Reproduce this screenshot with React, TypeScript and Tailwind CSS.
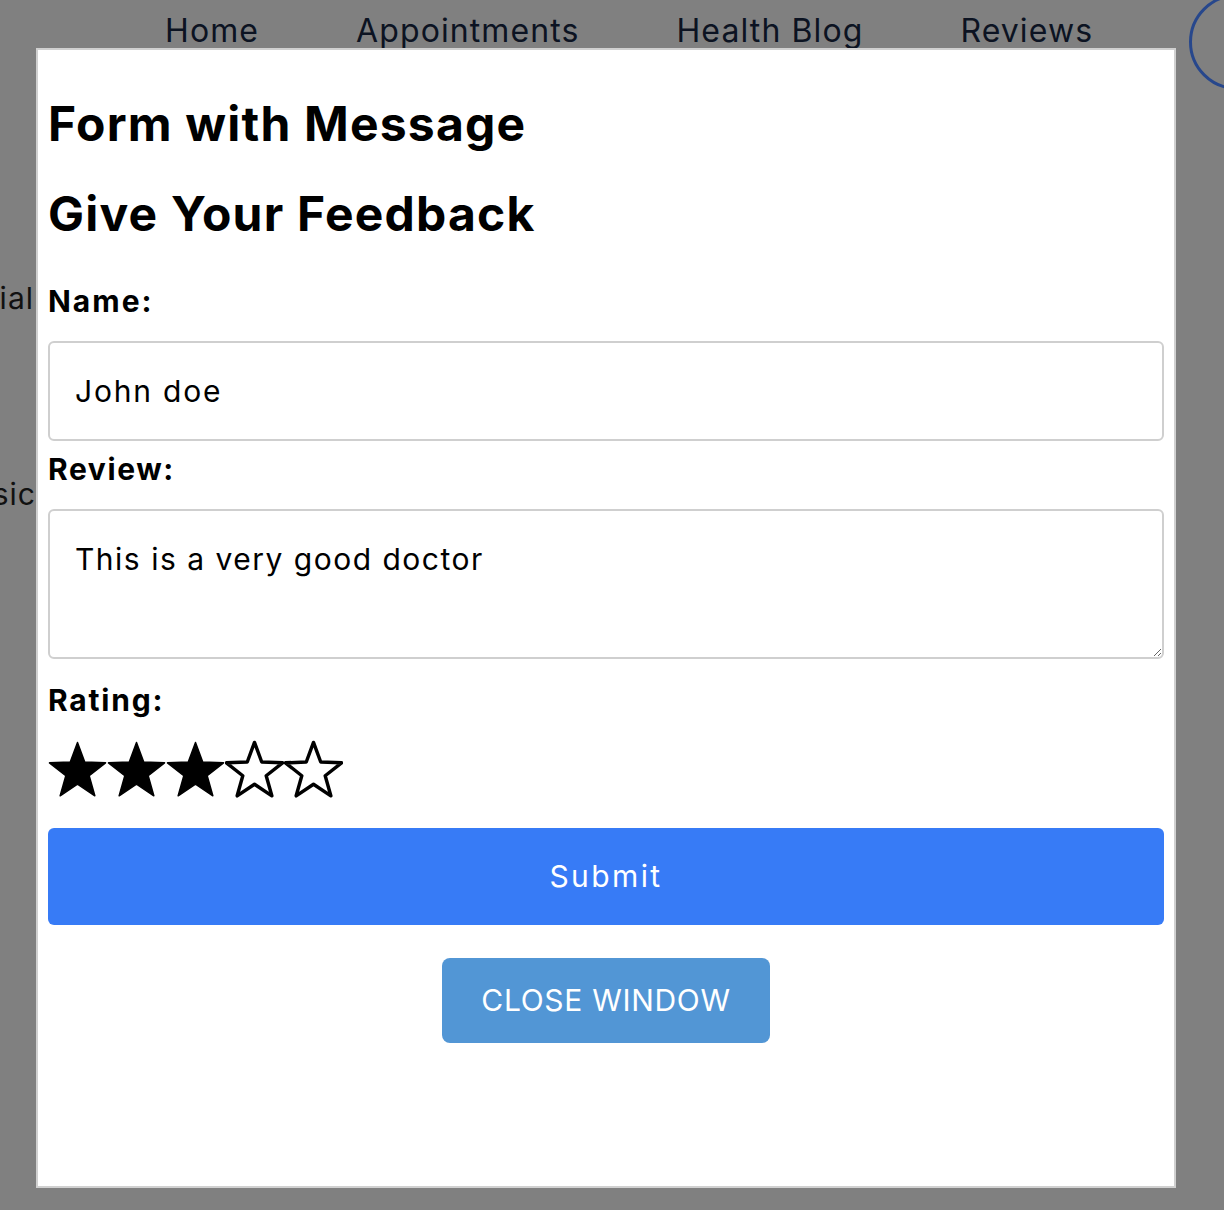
import React from 'react';

const font = { fontFamily: 'Inter, "Noto Sans", sans-serif' };

function Star({ filled }: { filled: boolean }) {
  return (
    <svg width="59" height="58" viewBox="0 0 60 58">
      <polygon
        points="30,2 37.35,21.89 58.53,22.73 41.89,35.86 47.63,56.27 30,44.5 12.37,56.27 18.11,35.86 1.47,22.73 22.65,21.89"
        fill={filled ? '#000' : '#fff'}
        stroke="#000"
        strokeWidth={filled ? 1.5 : 3.5}
        strokeLinejoin="round"
      />
    </svg>
  );
}

export default function App() {
  return (
    <div className="relative w-full h-screen overflow-hidden bg-[#808080]" style={font}>
      <nav className="flex gap-[97px] pl-[165px] pt-[11px] text-[32px] leading-[40px] tracking-[1.1px] text-[#0c1322]">
        <span>Home</span>
        <span>Appointments</span>
        <span>Health Blog</span>
        <span>Reviews</span>
      </nav>
      <div className="absolute left-[1189px] top-[-6px] w-[96px] h-[96px] rounded-full border-[3px] border-[#27478c]" />

      <div className="flex flex-col text-[30px] leading-[34px] tracking-[1px] text-[#111]">
        <div className="flex justify-end w-[34px] overflow-hidden mt-[230px]">
          <span className="shrink-0 whitespace-nowrap">Special</span>
        </div>
        <div className="flex justify-end w-[36px] overflow-hidden mt-[162px]">
          <span className="shrink-0 whitespace-nowrap">Physic</span>
        </div>
      </div>

      <div className="fixed left-[36px] top-[48px] w-[1140px] h-[1140px] border-2 border-[#d0d0d0] bg-white px-[10px] pt-[10px] flex flex-col">
        <h2 className="mt-[36px] text-[48px] leading-[56px] tracking-[1.2px] font-bold text-black">Form with Message</h2>
        <h2 className="mt-[34px] text-[48px] leading-[56px] tracking-[1.2px] font-bold text-black">Give Your Feedback</h2>
        <label className="mt-[42px] text-[30px] leading-[34px] tracking-[2px] font-bold text-black">Name:</label>
        <input
          readOnly
          value="John doe"
          className="mt-[23px] h-[100px] w-full border-2 border-[#cfcfcf] rounded-[6px] px-[25px] text-[30px] tracking-[1.8px] text-black outline-none"
          style={font}
        />
        <label className="mt-[11px] text-[30px] leading-[34px] tracking-[1.6px] font-bold text-black">Review:</label>
        <textarea
          readOnly
          value="This is a very good doctor"
          className="mt-[23px] h-[150px] w-full border-2 border-[#cfcfcf] rounded-[6px] px-[25px] pt-[28px] text-[30px] leading-[40px] tracking-[1.5px] text-black outline-none"
          style={font}
        />
        <label className="mt-[24px] text-[30px] leading-[34px] tracking-[1.8px] font-bold text-black">Rating:</label>
        <div className="mt-[23px] flex">
          <Star filled />
          <Star filled />
          <Star filled />
          <Star filled={false} />
          <Star filled={false} />
        </div>
        <button className="mt-[30px] h-[97px] w-full rounded-[6px] bg-[#377bf6] text-white text-[30px] tracking-[2.4px]">
          Submit
        </button>
        <button className="mt-[33px] mx-auto h-[85px] w-[328px] rounded-[8px] bg-[#5296d5] text-white text-[30px] tracking-[0.7px] uppercase">
          Close Window
        </button>
      </div>
    </div>
  );
}
